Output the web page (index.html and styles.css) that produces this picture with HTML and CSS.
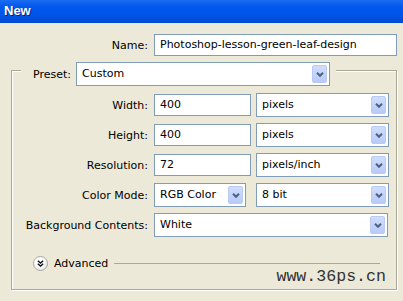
FILE: index.html
```html
<!DOCTYPE html>
<html lang="en">
<head>
    <meta charset="UTF-8" />
    <title>New</title>
    <link rel="stylesheet" href="styles.css">
</head>
<body>
    <div class="titlebar">New</div>

    <div class="dialog">
        <div class="row">
            <span class="label name-label">Name:</span>
            <div class="field name-field">Photoshop-lesson-green-leaf-design</div>
        </div>

        <div class="group">
            <div class="preset">
                <span class="label">Preset:</span>
                <div class="combo preset-combo">Custom<span class="drop"><svg width="8" height="5" viewBox="0 0 8 5"><polyline points="1,0.8 4,3.8 7,0.8" fill="none" stroke="#4d6185" stroke-width="2"/></svg></span></div>
            </div>

            <div class="rows">
                <div class="row">
                    <span class="label">Width:</span>
                    <div class="field small">400</div>
                    <div class="combo unit">pixels<span class="drop"><svg width="8" height="5" viewBox="0 0 8 5"><polyline points="1,0.8 4,3.8 7,0.8" fill="none" stroke="#4d6185" stroke-width="2"/></svg></span></div>
                </div>
                <div class="row">
                    <span class="label">Height:</span>
                    <div class="field small">400</div>
                    <div class="combo unit">pixels<span class="drop"><svg width="8" height="5" viewBox="0 0 8 5"><polyline points="1,0.8 4,3.8 7,0.8" fill="none" stroke="#4d6185" stroke-width="2"/></svg></span></div>
                </div>
                <div class="row">
                    <span class="label">Resolution:</span>
                    <div class="field small">72</div>
                    <div class="combo unit">pixels/inch<span class="drop"><svg width="8" height="5" viewBox="0 0 8 5"><polyline points="1,0.8 4,3.8 7,0.8" fill="none" stroke="#4d6185" stroke-width="2"/></svg></span></div>
                </div>
                <div class="row">
                    <span class="label">Color Mode:</span>
                    <div class="combo mode">RGB Color<span class="drop"><svg width="8" height="5" viewBox="0 0 8 5"><polyline points="1,0.8 4,3.8 7,0.8" fill="none" stroke="#4d6185" stroke-width="2"/></svg></span></div>
                    <div class="combo unit">8 bit<span class="drop"><svg width="8" height="5" viewBox="0 0 8 5"><polyline points="1,0.8 4,3.8 7,0.8" fill="none" stroke="#4d6185" stroke-width="2"/></svg></span></div>
                </div>
                <div class="row">
                    <span class="label">Background Contents:</span>
                    <div class="combo bg">White<span class="drop"><svg width="8" height="5" viewBox="0 0 8 5"><polyline points="1,0.8 4,3.8 7,0.8" fill="none" stroke="#4d6185" stroke-width="2"/></svg></span></div>
                </div>
            </div>

            <div class="advanced">
                <span class="adv-btn"><svg width="7" height="7" viewBox="0 0 7 7"><polyline points="0.8,0.8 3.5,3 6.2,0.8" fill="none" stroke="#111" stroke-width="1.4"/><polyline points="0.8,3.8 3.5,6 6.2,3.8" fill="none" stroke="#111" stroke-width="1.4"/></svg></span>
                <span class="adv-text">Advanced</span>
                <span class="adv-line"></span>
            </div>

            <div class="mark">www.36ps.cn</div>
        </div>
    </div>
</body>
</html>
```

FILE: styles.css
```css
body {
    margin: 0;
    width: 403px;
    height: 301px;
    background: #ece9d8;
    font-family: "DejaVu Sans", sans-serif;
    font-size: 11px;
    color: #000;
    overflow: hidden;
}
.titlebar {
    height: 23px;
    padding-left: 4px;
    line-height: 22px;
    font-family: "Liberation Sans", Arial, sans-serif;
    font-size: 13px;
    font-weight: bold;
    color: #fff;
    text-shadow: 1px 1px 0 #0a1e8c;
    background: linear-gradient(#1c6cf0, #0058ee 30%, #0053e6 70%, #0047cf);
}
.dialog {
    padding-top: 10px;
}
.row {
    display: flex;
    align-items: center;
    height: 24px;
}
.label {
    flex: none;
    text-align: right;
    white-space: nowrap;
}
.name-label {
    width: 148px;
    margin-right: 6px;
}
.field,
.combo {
    box-sizing: border-box;
    border: 1px solid #7f9db9;
    background: #fff;
    padding-left: 5px;
    white-space: nowrap;
}
.field {
    height: 22px;
    line-height: 20px;
}
.combo {
    position: relative;
    height: 24px;
    line-height: 22px;
}
.name-field {
    width: 243px;
}
.drop {
    position: absolute;
    right: 2px;
    top: 2px;
    width: 15px;
    height: 18px;
    box-sizing: border-box;
    border: 1px solid #b9cbf5;
    border-radius: 2px;
    background: linear-gradient(#d0ddfc, #b8cbf7);
    display: flex;
    align-items: center;
    justify-content: center;
}
.group {
    box-sizing: border-box;
    margin: 13px 0 0 11px;
    width: 386px;
    height: 220px;
    border: 1px solid #aca899;
    box-shadow: inset 1px 1px 0 #fff, 1px 1px 0 #fff;
}
.preset {
    display: flex;
    align-items: center;
    height: 24px;
    margin: -9px 0 0 9px;
    padding: 0 6px 0 12px;
    width: fit-content;
    background: #ece9d8;
}
.preset .label {
    margin-right: 5px;
}
.preset-combo {
    width: 254px;
}
.rows {
    display: flex;
    flex-direction: column;
    gap: 6px;
    margin-top: 7px;
}
.rows .label {
    width: 136px;
    margin-right: 6px;
}
.small {
    width: 97px;
    margin-right: 5px;
}
.unit {
    width: 133px;
}
.mode {
    width: 92px;
    margin-right: 10px;
}
.bg {
    width: 234px;
}
.advanced {
    display: flex;
    align-items: center;
    height: 16px;
    margin: 18px 0 0 21px;
}
.adv-btn {
    box-sizing: border-box;
    width: 15px;
    height: 15px;
    border-radius: 50%;
    border: 1px solid #a9a9a2;
    background: radial-gradient(circle at 40% 35%, #fff 35%, #dcdad2);
    display: flex;
    align-items: center;
    justify-content: center;
}
.adv-text {
    margin-left: 6px;
}
.adv-line {
    margin-left: 6px;
    width: 266px;
    height: 1px;
    background: #aca899;
}
.mark {
    margin-top: -4px;
    padding-right: 10px;
    text-align: right;
    font-family: "Liberation Mono", "Courier New", monospace;
    font-size: 16.6px;
    color: #333;
}
```
